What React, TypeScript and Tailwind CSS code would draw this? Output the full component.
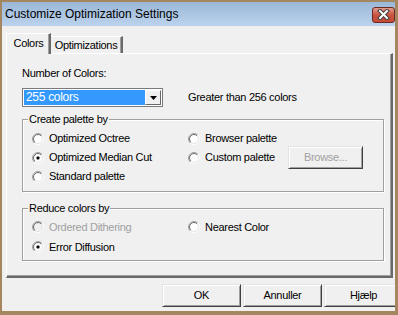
import React from 'react';

const font = { fontFamily: '"Liberation Sans", Arial, sans-serif' };

function Radio({ checked = false, disabled = false }: { checked?: boolean; disabled?: boolean }) {
  return (
    <svg width="12" height="12" viewBox="0 0 12 12" className="shrink-0">
      <defs>
        <linearGradient id="rOuter" x1="0" y1="0" x2="1" y2="1">
          <stop offset="0.5" stopColor="#a0a0a0" />
          <stop offset="0.5" stopColor="#ffffff" />
        </linearGradient>
        <linearGradient id="rInner" x1="0" y1="0" x2="1" y2="1">
          <stop offset="0.5" stopColor="#696969" />
          <stop offset="0.5" stopColor="#e3e3e3" />
        </linearGradient>
      </defs>
      <circle cx="6" cy="6" r="5.5" fill="none" stroke="url(#rOuter)" />
      <circle cx="6" cy="6" r="4.5" fill={disabled ? '#f0f0f0' : '#ffffff'} stroke="url(#rInner)" />
      {checked && <rect x="4.5" y="4.5" width="3" height="3" rx="1" fill="#000" />}
    </svg>
  );
}

function Option({ label, checked, disabled }: { label: string; checked?: boolean; disabled?: boolean }) {
  return (
    <div className="flex items-center gap-[5px]">
      <Radio checked={checked} disabled={disabled} />
      <span className={disabled ? 'text-[#a0a0a0]' : 'text-black'}>{label}</span>
    </div>
  );
}

function Button({ children, disabled }: { children: React.ReactNode; disabled?: boolean }) {
  return (
    <div
      className={`h-[23px] flex items-center justify-center bg-[#f0f0f0] border border-t-[#e3e3e3] border-l-[#e3e3e3] border-r-[#404040] border-b-[#404040] shadow-[inset_1px_1px_0_#ffffff,inset_-1px_-1px_0_#a0a0a0] ${disabled ? 'text-[#a0a0a0]' : 'text-black'}`}
    >
      {children}
    </div>
  );
}

// group box: label sits on the top border line
function Group({ title, children, className }: { title: string; children: React.ReactNode; className?: string }) {
  return (
    <div className={`border border-[#a0a0a0] shadow-[inset_1px_1px_0_#ffffff,1px_1px_0_#ffffff] ${className ?? ''}`}>
      <div className="-mt-[7px] ml-[5px] px-[1px] w-fit bg-[#f0f0f0] leading-[13px]">{title}</div>
      {children}
    </div>
  );
}

export default function App() {
  return (
    <div
      className="w-[398px] h-[315px] bg-[#a4875f] pt-[2px] pl-[2px] pr-[3px] pb-[4px] flex flex-col overflow-hidden text-[11px] leading-[13px] tracking-[-0.3px]"
      style={font}
    >
      {/* Title bar */}
      <div className="h-[24px] flex items-center justify-between pl-[3px] bg-gradient-to-b from-[#9bb7d8] to-[#bcd3ec]">
        <span className="text-[12px] tracking-normal text-black">Customize Optimization Settings</span>
        <div className="mt-[1px] w-[23px] h-[16px] rounded-[3px] border border-[#6b2a22] bg-gradient-to-b from-[#e09a8c] via-[#c9533f] to-[#c44a35] flex items-center justify-center">
          <svg width="13" height="11" viewBox="0 0 13 11">
            <path d="M3 2 L10 9 M10 2 L3 9" stroke="#3b3b3b" strokeWidth="4" strokeLinecap="square" />
            <path d="M3 2 L10 9 M10 2 L3 9" stroke="#ffffff" strokeWidth="2" strokeLinecap="square" />
          </svg>
        </div>
      </div>

      {/* Client area */}
      <div className="flex-1 bg-[#f0f0f0] flex flex-col pl-[4px] pr-[2px] pt-[7px] overflow-hidden">
        {/* Tabs */}
        <div className="relative z-10 flex items-end h-[21px] -mb-[1px]">
          <div className="h-[21px] w-[45px] bg-[#f0f0f0] border-t border-l border-t-[#ffffff] border-l-[#ffffff] border-r-2 border-r-[#696969] shadow-[inset_-1px_0_0_#a0a0a0] flex items-center justify-center pb-[1px] pl-[1px] rounded-tl-[2px]">
            Colors
          </div>
          <div className="h-[17px] w-[72px] mb-[1px] border-t border-t-[#ffffff] border-r-2 border-r-[#696969] shadow-[inset_-1px_0_0_#a0a0a0] flex items-center justify-center">
            Optimizations
          </div>
        </div>

        {/* Panel */}
        <div className="h-[225px] border-t border-l border-t-[#ffffff] border-l-[#ffffff] border-r-2 border-b-2 border-r-[#696969] border-b-[#696969] shadow-[inset_-1px_-1px_0_#a0a0a0] pt-[13px] pl-[15px] pr-[7px]">
          <div>Number of Colors:</div>
          <div className="mt-[8px] flex items-center">
            <div className="w-[141px] h-[19px] border border-[#7a7a7a] bg-white p-[1px] flex">
              <div className="flex-1 bg-[#3399ff] text-white pl-[2px] flex items-center text-[12px]">255 colors</div>
              <div className="w-[16px] bg-[#f0f0f0] border border-t-[#ffffff] border-l-[#ffffff] border-r-[#696969] border-b-[#696969] flex items-center justify-center">
                <svg width="7" height="4" viewBox="0 0 7 4">
                  <path d="M0 0 H7 L3.5 4 Z" fill="#000" />
                </svg>
              </div>
            </div>
            <span className="ml-[25px]">Greater than 256 colors</span>
          </div>

          <Group title="Create palette by" className="mt-[12px]">
            <div className="grid grid-cols-[156px_1fr] mt-[3px] pl-[9px] pr-[20px] pb-[5px]">
              <div className="h-[19px] flex items-center"><Option label="Optimized Octree" /></div>
              <div className="h-[19px] flex items-center"><Option label="Browser palette" /></div>
              <div className="h-[19px] flex items-center"><Option label="Optimized Median Cut" checked /></div>
              <div className="h-[19px] flex items-center">
                <Option label="Custom palette" />
                <div className="ml-auto w-[75px]">
                  <Button disabled>Browse...</Button>
                </div>
              </div>
              <div className="h-[19px] flex items-center"><Option label="Standard palette" /></div>
            </div>
          </Group>

          <Group title="Reduce colors by" className="mt-[16px]">
            <div className="grid grid-cols-[156px_1fr] mt-[2px] pl-[9px] pb-[3px]">
              <div className="h-[20px] flex items-center"><Option label="Ordered Dithering" disabled /></div>
              <div className="h-[20px] flex items-center"><Option label="Nearest Color" /></div>
              <div className="h-[20px] flex items-center"><Option label="Error Diffusion" checked /></div>
            </div>
          </Group>
        </div>

        {/* Buttons */}
        <div className="mt-[6px] pl-[156px] flex gap-[2px]">
          <div className="w-[79px] shrink-0"><Button>OK</Button></div>
          <div className="w-[79px] shrink-0"><Button>Annuller</Button></div>
          <div className="w-[79px] shrink-0"><Button>Hjælp</Button></div>
        </div>
      </div>
    </div>
  );
}
